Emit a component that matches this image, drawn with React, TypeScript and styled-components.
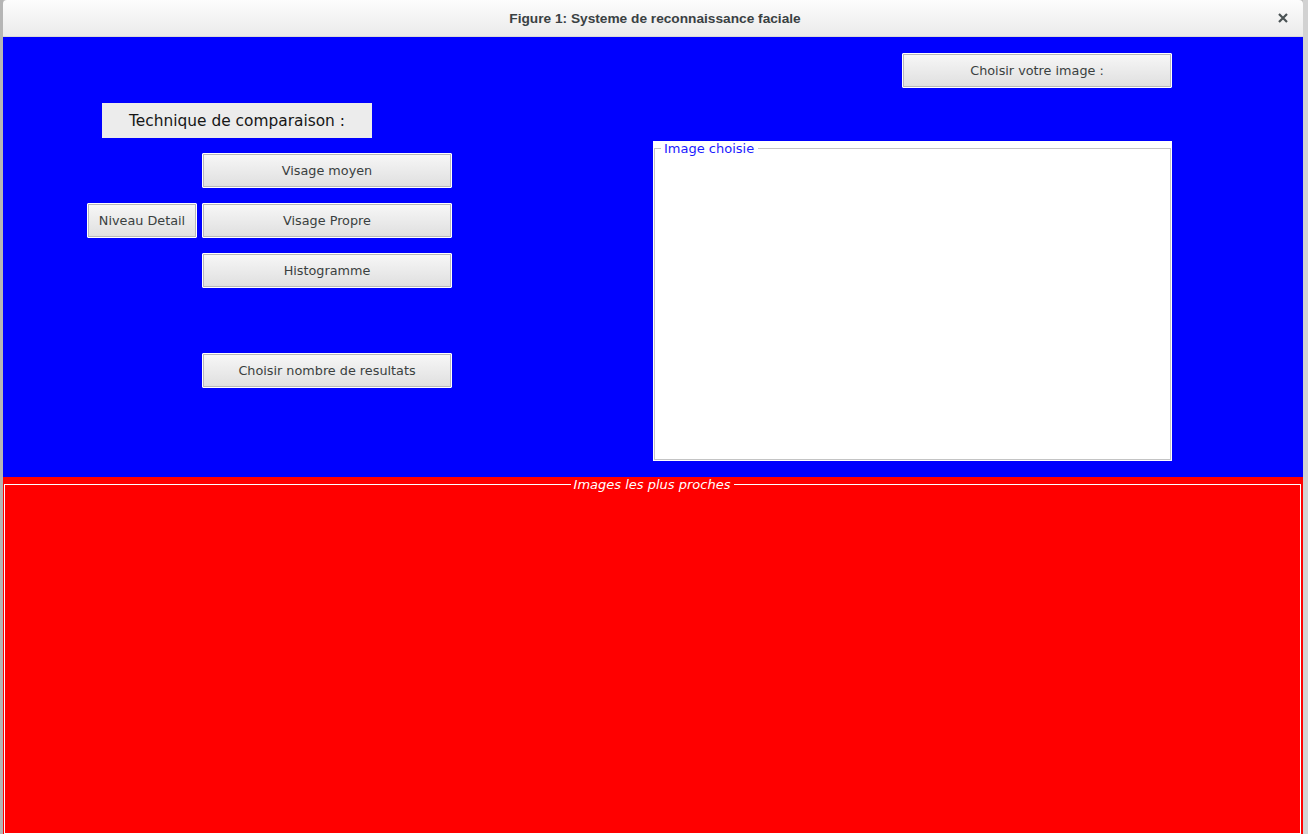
import React from "react";
import styled, { createGlobalStyle } from "styled-components";

const Global = createGlobalStyle`
  html, body { margin: 0; padding: 0; }
  body {
    background: #bcbcbc;
    overflow: hidden;
    font-family: "DejaVu Sans", "Liberation Sans", sans-serif;
  }
`;

const Screen = styled.div`
  display: flex;
  width: 1308px;
  height: 834px;
  overflow: hidden;
`;

const Strip = styled.div<{ $w: number; $bg: string }>`
  width: ${(p) => p.$w}px;
  flex: none;
  background: ${(p) => p.$bg};
`;

const Window = styled.div`
  width: 1300px;
  flex: none;
  display: flex;
  flex-direction: column;
`;

const TitleBar = styled.div`
  height: 37px;
  flex: none;
  box-sizing: border-box;
  display: grid;
  grid-template-columns: 1fr auto 1fr;
  align-items: center;
  background: linear-gradient(#fdfdfd, #ebebeb);
  border-bottom: 1px solid #d9d9d9;
  border-radius: 4px 4px 0 0;
`;

const Title = styled.div`
  grid-column: 2;
  font-family: "Liberation Sans", "DejaVu Sans", sans-serif;
  font-weight: bold;
  font-size: 13.7px;
  color: #3a4143;
  padding-left: 4px;
`;

const CloseBox = styled.div`
  grid-column: 3;
  justify-self: end;
  display: flex;
  align-items: center;
  padding-right: 15px;
`;

const BlueArea = styled.div`
  height: 440px;
  flex: none;
  background: #0000ff;
  display: flex;
`;

const LeftCol = styled.div`
  width: 650px;
  flex: none;
  box-sizing: border-box;
  padding: 66px 0 0 84px;
  display: flex;
  flex-direction: column;
`;

const LabelBox = styled.div`
  width: 270px;
  height: 35px;
  margin-left: 15px;
  margin-bottom: 15px;
  background: #ececec;
  display: flex;
  align-items: center;
  justify-content: center;
  font-size: 15.4px;
  color: #161616;
`;

const ButtonGrid = styled.div`
  display: grid;
  grid-template-columns: 110px 250px;
  grid-template-rows: repeat(5, 35px);
  column-gap: 5px;
  row-gap: 15px;
`;

const Button = styled.button<{ $w?: number; $col?: number; $row?: number }>`
  width: ${(p) => (p.$w ? `${p.$w}px` : "100%")};
  height: 35px;
  box-sizing: border-box;
  margin: 0;
  padding: 0;
  grid-column: ${(p) => p.$col ?? "auto"};
  grid-row: ${(p) => p.$row ?? "auto"};
  border: 1px solid #ffffff;
  background: linear-gradient(#f7f7f7, #dfdfdf);
  box-shadow: inset 0 0 0 1px #b9b9b9;
  border-radius: 1px;
  font-family: "DejaVu Sans", sans-serif;
  font-size: 12.8px;
  color: #3a3f40;
  display: flex;
  align-items: center;
  justify-content: center;
  cursor: default;
`;

const RightCol = styled.div`
  width: 519px;
  flex: none;
  box-sizing: border-box;
  padding-top: 16px;
  display: flex;
  flex-direction: column;
  align-items: flex-end;
`;

const ImageFrame = styled.div`
  margin-top: 53px;
  width: 519px;
  height: 320px;
  box-sizing: border-box;
  background: #ffffff;
  padding: 0 1px 1px 1px;
  display: flex;
`;

const FieldBox = styled.fieldset<{ $line: string }>`
  flex: 1;
  margin: 0;
  padding: 0;
  min-width: 0;
  border: 1px solid ${(p) => p.$line};
`;

const Legend = styled.legend<{ $color: string; $italic?: boolean; $center?: boolean }>`
  font-family: "DejaVu Sans", sans-serif;
  font-size: 13px;
  line-height: 15px;
  color: ${(p) => p.$color};
  font-style: ${(p) => (p.$italic ? "italic" : "normal")};
  padding: 0 4px 0 3px;
  margin: ${(p) => (p.$center ? "0 auto" : "0 0 0 6px")};
`;

const RedArea = styled.div`
  flex: 1;
  background: #ff0000;
  padding: 0 2px 0 1px;
  display: flex;
`;

const CloseIcon = () => (
  <svg width="10" height="10" viewBox="0 0 10 10">
    <path d="M1 1 L9 9 M9 1 L1 9" stroke="#4a5254" strokeWidth="2.2" strokeLinecap="butt" />
  </svg>
);

export default function App() {
  return (
    <>
      <Global />
      <Screen>
        <Strip $w={3} $bg="#b5b5b5" />
        <Window>
          <TitleBar>
            <Title>Figure 1: Systeme de reconnaissance faciale</Title>
            <CloseBox>
              <CloseIcon />
            </CloseBox>
          </TitleBar>
          <BlueArea>
            <LeftCol>
              <LabelBox>Technique de comparaison :</LabelBox>
              <ButtonGrid>
                <Button $col={2} $row={1}>Visage moyen</Button>
                <Button $col={1} $row={2}>Niveau Detail</Button>
                <Button $col={2} $row={2}>Visage Propre</Button>
                <Button $col={2} $row={3}>Histogramme</Button>
                <Button $col={2} $row={5}>Choisir nombre de resultats</Button>
              </ButtonGrid>
            </LeftCol>
            <RightCol>
              <Button $w={270}>Choisir votre image :</Button>
              <ImageFrame>
                <FieldBox $line="#c4c4c4">
                  <Legend $color="#1a1aff">Image choisie</Legend>
                </FieldBox>
              </ImageFrame>
            </RightCol>
          </BlueArea>
          <RedArea>
            <FieldBox $line="#ffffff">
              <Legend $color="#ffffff" $italic $center>
                Images les plus proches
              </Legend>
            </FieldBox>
          </RedArea>
        </Window>
        <Strip $w={5} $bg="#d2d2d2" />
      </Screen>
    </>
  );
}
